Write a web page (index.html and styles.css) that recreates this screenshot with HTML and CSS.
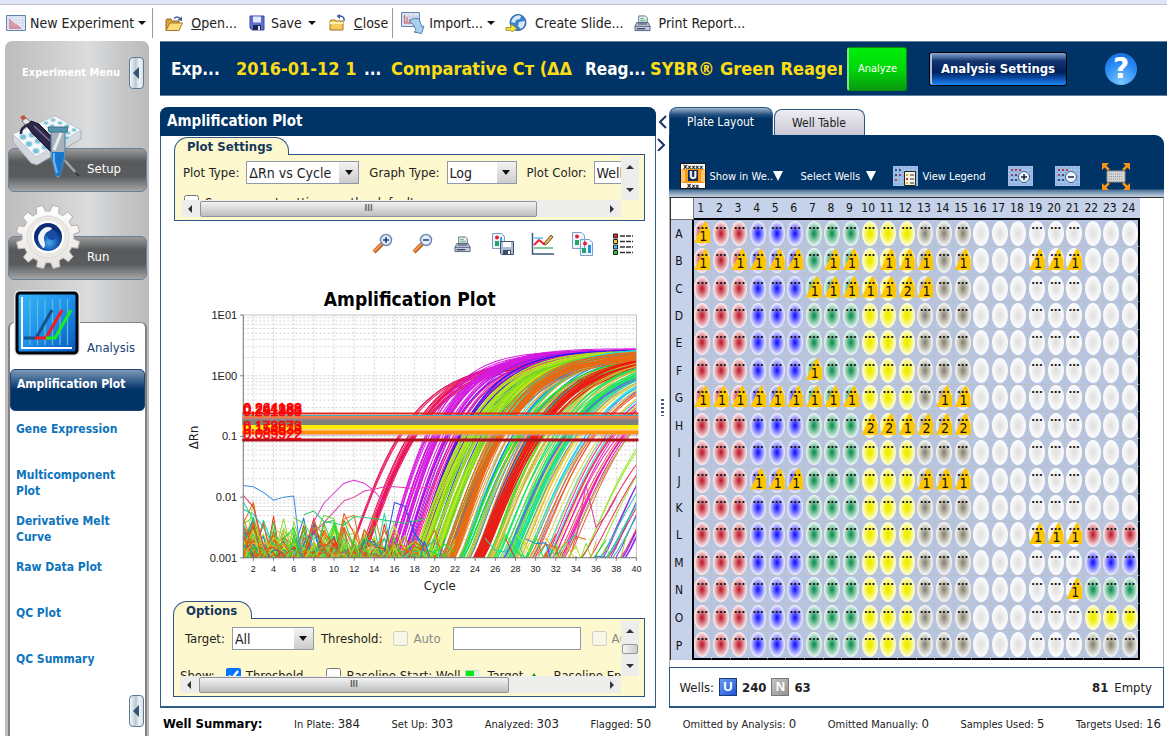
FILE: index.html
```html
<!DOCTYPE html>
<html lang="en">
<head>
  <meta charset="utf-8">
  <title>Amplification Plot</title>
  <link rel="stylesheet" href="styles.css">
</head>
<body>
  <svg class="sprite" width="0" height="0" aria-hidden="true">
    <symbol id="icon-folder" viewBox="0 0 18 17">
      <path d="M1 15V5l1-1h4l1 2h7v9z" fill="#d9a33a" stroke="#94682a"/>
      <path d="M1 15.5 5 8h12.500l-3.500 7.500z" fill="#fbdc74" stroke="#a87a2c"/>
      <path d="M9 3.500q3-3 6 0" fill="none" stroke="#3d5f97" stroke-width="1.500"/>
      <path d="M17 1.500V6l-4.500-1z" fill="#3d5f97"/>
    </symbol>
    <symbol id="icon-close" viewBox="0 0 18 18">
      <path d="M2 16V7l1-1h4l1 1h7v9z" fill="#f5cc5c" stroke="#a0742a"/>
      <path d="M2 9h13" stroke="#fff0b0" stroke-width="2"/>
      <path d="M16 7q1-5-5-5" fill="none" stroke="#3d5f97" stroke-width="1.500"/>
      <path d="M12 0v5L8.500 2z" fill="#3d5f97"/>
    </symbol>
    <symbol id="icon-printer" viewBox="0 0 18 18">
      <path d="M5 9V1h7l2 2v6z" fill="#eefaf0" stroke="#5b6a88"/>
      <path d="M6.500 3.500h4m-4 2h6m-6 2h6" stroke="#5aa07e"/>
      <path d="M3 8h12l2 4v4.500H1V12z" fill="#c5cbde" stroke="#555f80"/>
      <path d="M1 12h16" stroke="#555f80"/>
      <path d="M3 14.500h9" stroke="#40486a" stroke-width="1.500"/>
      <path d="M4 9.500h10" stroke="#343a58"/>
    </symbol>
    <symbol id="icon-floppy" viewBox="0 0 16 16">
      <path d="M1 1h14v14H3l-2-2z" fill="#5d70d0" stroke="#3c4aa4"/>
      <path d="M4 1.500h8v6H4z" fill="#e4eafb"/>
      <path d="M4 10h8v5H4z" fill="#20264e"/>
      <path d="M9 11h2v4H9z" fill="#dfe5fa"/>
    </symbol>
    <symbol id="icon-wells" viewBox="0 0 25 20">
      <path d="M0 0h25v20H0z" fill="#8fb3e0"/>
      <path d="M0 0h25M0 4h25M0 8h25M0 12h25M0 16h25M0 20h25M0 0v20M4 0v20M8 0v20M12 0v20M16 0v20M20 0v20M25 0v20" stroke="#b9d1ee" stroke-width=".7"/>
    </symbol>
  </svg>

  <div class="strip"></div>

  <nav class="toolbar" aria-label="Experiment">
    <button class="toolbar__item toolbar__item--first" type="button">
      <svg width="20" height="16" viewBox="0 0 20 16"><path d="M.5.5h19v15H.5z" fill="#dbe5f5" stroke="#6484ae"/><path d="M3 3h14v10H3z" fill="#eef2fb"/><path d="M4 2v12M7 2v12M10 2v12M13 2v12M16 2v12M2 5h16M2 8h16M2 11h16" stroke="#bccbe4" stroke-width=".6"/><path d="M4 4v9h11M6 6v6M8 8v4M10 9v3M12 10v2" fill="none" stroke="#d4757d" stroke-width="1.300"/></svg>
      New Experiment <span class="caret"></span>
    </button>
    <button class="toolbar__item toolbar__item--open" type="button">
      <svg width="18" height="17"><use href="#icon-folder"/></svg>
      <span><u>O</u>pen...</span>
    </button>
    <button class="toolbar__item toolbar__item--save" type="button">
      <svg width="16" height="16"><use href="#icon-floppy"/></svg>
      Save <span class="caret"></span>
    </button>
    <button class="toolbar__item toolbar__item--close" type="button">
      <svg width="18" height="18"><use href="#icon-close"/></svg>
      <span><u>C</u>lose</span>
    </button>
    <button class="toolbar__item toolbar__item--import" type="button">
      <svg width="24" height="22" viewBox="0 0 24 22"><path d="M.5.5h18v14H.5z" fill="#dbe5f5" stroke="#6484ae"/><path d="M4 2v11M8 2v11M12 2v11M16 2v11M1 5h17M1 9h17" stroke="#b9c9e4" stroke-width=".7"/><path d="M3.500 3v8h8M6 5v5M9 7v3" fill="none" stroke="#d4757d" stroke-width="1.300"/><path d="M9 8q5-3 9-1l3 8 2-1-2.500 7.500L13 20l2-1.500q-1-6-6-8.500z" fill="#a9d0ef" stroke="#5480aa"/></svg>
      Import... <span class="caret"></span>
    </button>
    <button class="toolbar__item toolbar__item--slide" type="button">
      <svg width="22" height="18" viewBox="0 0 22 18"><circle cx="13" cy="8.500" r="8" fill="#3c82cb" stroke="#2d5f9e"/><path d="M8 4q4-4 8-2l-1 3-4 1-1 3-4-1zM14 8l6-1q0 5-4 8l-3-3z" fill="#d4e9f8"/><path d="M1 13.500h5V10l6 4.500-5 3.300-1-1.500H1z" fill="#f7e93a" stroke="#96821f" stroke-width=".8"/></svg>
      Create Slide...
    </button>
    <button class="toolbar__item toolbar__item--print" type="button">
      <svg width="17" height="17"><use href="#icon-printer"/></svg>
      Print Report...
    </button>
  </nav>

  <div class="workspace">
    <aside class="menu">
      <div class="menu__head">
        <strong>Experiment Menu</strong>
        <button class="fold" type="button" aria-label="Collapse menu"></button>
      </div>
      <button class="step" type="button">
        <svg class="step__icon" width="72" height="66" viewBox="0 0 72 66">
          <path d="M1 19 43 1l26 14v9L25 50 19 48 1 27z" fill="#d3d8df" stroke="#a4abb6"/>
          <path d="M1 19 43 1l26 14-45 27z" fill="#f6f8fa" stroke="#c5cad2"/>
          <g fill="#7cc3d8" stroke="#d2eaf2">
            <ellipse cx="11" cy="22" rx="3.500" ry="3"/><ellipse cx="17" cy="29" rx="3.500" ry="3"/><ellipse cx="24" cy="36" rx="3.500" ry="3"/>
            <ellipse cx="20" cy="20" rx="3.500" ry="3"/><ellipse cx="26" cy="26" rx="3.500" ry="3"/><ellipse cx="33" cy="32" rx="3.500" ry="3"/>
            <ellipse cx="34" cy="8" rx="2.500" ry="2"/><ellipse cx="41" cy="5" rx="2.500" ry="2"/><ellipse cx="48" cy="8" rx="2.500" ry="2"/>
            <ellipse cx="55" cy="11" rx="2.500" ry="2"/><ellipse cx="62" cy="15" rx="2.500" ry="2"/><ellipse cx="56" cy="18" rx="2.500" ry="2"/>
            <ellipse cx="40" cy="11" rx="2.500" ry="2"/><ellipse cx="55" cy="23" rx="2.500" ry="2"/><ellipse cx="49" cy="14" rx="2.500" ry="2"/>
          </g>
          <path d="m8 2 4-2 3 4-3 3z" fill="#c95430"/>
          <path d="m10 6 4-3 6 5-4 5z" fill="#e9e6e4" stroke="#77727e"/>
          <path d="m15 11 4-5 8 3 20 20-7 9-20-20z" fill="#2e2748" stroke="#15112a"/>
          <path d="m22 11 16 15" stroke="#77709b" stroke-width="1.500"/>
          <path d="M17 9q-9 4-8 10" fill="none" stroke="#302a48" stroke-width="2.500"/>
          <path d="m47 39 18 20" stroke="#a5a8ad" stroke-width="2.500"/><path d="m63 57 4 4" stroke="#36383b" stroke-width="2"/>
          <path d="M39 16h14v26l-5 19q-2 4-4 0l-5-19z" fill="#a7b2bd" stroke="#4b7a99"/>
          <path d="M40 37h12v6l-4 17q-2 3-4 0l-4-17z" fill="#1676ce"/>
          <path d="M42 38v8l3 12" fill="none" stroke="#74b6ee" stroke-width="2"/>
          <path d="M36 12h20l-1 5H37z" fill="#5594aa" stroke="#3a7389"/>
          <path d="m49 18-7 17" stroke="#e6edf2" stroke-width="3"/>
        </svg>
        Setup
      </button>
      <button class="step step--run" type="button">
        <svg class="step__icon" width="68" height="68" viewBox="-34 -34 68 68">
          <defs>
            <radialGradient id="gear-core" cx=".55" cy=".7"><stop offset="0" stop-color="#4ea8ee"/><stop offset=".6" stop-color="#1559b0"/><stop offset="1" stop-color="#0a2c74"/></radialGradient>
            <linearGradient id="gear-metal" x2="0" y2="1"><stop offset="0" stop-color="#fff"/><stop offset="1" stop-color="#e6e3df"/></linearGradient>
          </defs>
          <path id="gear-teeth" fill="url(#gear-metal)" stroke="#b4aea7"/>
          <circle r="21" fill="#eceae7" stroke="#dedad5"/>
          <circle r="17" fill="#fff" stroke="#e3e0dc"/>
          <circle r="14" fill="url(#gear-core)"/>
          <path d="M-5 11q-8-9-3-16 5-7 12-4-1 3-5 4-5 4-2 12 0 4-2 4z" fill="#f1f4fa"/>
          <circle cx="4" cy="-2" r="5" fill="#154ea4"/>
        </svg>
        Run
      </button>
      <div class="analysis">
        <button class="step step--analysis" type="button">
          <svg class="step__icon" width="68" height="68" viewBox="0 0 68 68">
            <defs><linearGradient id="analysis-fill" x2="1" y2="1"><stop offset="0" stop-color="#35b7fa"/><stop offset=".5" stop-color="#1e90ee"/><stop offset="1" stop-color="#0754b8"/></linearGradient></defs>
            <rect x="1" y="1" width="66" height="66" rx="6" fill="#e6e6e6"/>
            <rect x="4" y="4" width="60" height="60" rx="3" fill="url(#analysis-fill)" stroke="#020509" stroke-width="3"/>
            <path d="M17 10v46M24.500 10v46M32 10v46M39.500 10v46M47 10v46M54.500 10v46" stroke="#5fc1c8" stroke-width="1.200"/>
            <path d="M9 8v51h50" fill="none" stroke="#fff" stroke-width="2"/>
            <path d="M11 49h12l16-28" fill="none" stroke="#155089" stroke-width="3"/>
            <path d="M22 49h11l16-28" fill="none" stroke="#f71820" stroke-width="3"/>
            <path d="M33 49h9l16-28" fill="none" stroke="#14ef22" stroke-width="3"/>
          </svg>
          Analysis
        </button>
        <nav class="links" aria-label="Analysis">
          <a class="links__item links__item--active" href="#plot">Amplification Plot</a>
          <a class="links__item" href="#gene">Gene Expression</a>
          <a class="links__item" href="#multicomponent">Multicomponent Plot</a>
          <a class="links__item" href="#melt">Derivative Melt Curve</a>
          <a class="links__item" href="#raw">Raw Data Plot</a>
          <a class="links__item" href="#qc">QC Plot</a>
          <a class="links__item" href="#summary">QC Summary</a>
        </nav>
        <button class="fold fold--bottom" type="button" aria-label="Collapse menu"></button>
      </div>
    </aside>

    <main class="content">
      <header class="experiment">
        <span class="experiment__label">Exp...</span>
        <span class="experiment__value experiment__value--name">2016-01-12 1</span>
        <span class="experiment__label experiment__label--type">...</span>
        <span class="experiment__value experiment__value--type">Comparative Cт (ΔΔ</span>
        <span class="experiment__label">Reag...</span>
        <span class="experiment__value experiment__value--reagent">SYBR® Green Reagents</span>
        <button class="analyze" type="button">Analyze</button>
        <button class="settings" type="button">Analysis Settings</button>
        <button class="help" type="button" aria-label="Help">?</button>
      </header>

      <div class="panels">
        <section class="plot" id="plot">
          <h2 class="plot__title">Amplification Plot</h2>

          <div class="box">
            <h3 class="box__tab">Plot Settings</h3>
            <div class="box__body">
              <div class="box__view">
                <div class="row row--settings">
                  <label for="plot-type">Plot Type:</label>
                  <span class="select select--type"><select id="plot-type"><option>ΔRn vs Cycle</option></select></span>
                  <label class="row__next" for="graph-type">Graph Type:</label>
                  <span class="select select--graph"><select id="graph-type"><option>Log</option></select></span>
                  <label class="row__next" for="plot-color">Plot Color:</label>
                  <span class="select select--color"><select id="plot-color"><option>Well</option></select></span>
                </div>
                <div class="row row--cut">
                  <input id="save-default" type="checkbox">
                  <label for="save-default">Save current settings as the default</label>
                </div>
              </div>
              <div class="vbar"><i class="arrow arrow--up"></i><i class="arrow arrow--down"></i></div>
              <div class="hbar"><i class="arrow arrow--left"></i><div class="hbar__track"><b class="hbar__thumb hbar__thumb--settings">III</b></div><i class="arrow arrow--right"></i></div>
            </div>
          </div>

          <div class="tools">
            <button type="button" aria-label="Zoom in"><svg width="22" height="24" viewBox="0 0 22 24"><path d="m2 20 8-8" stroke="#b35318" stroke-width="4"/><path d="m2 19.500 8-8" stroke="#f7994a" stroke-width="2"/><circle cx="14" cy="8" r="5.500" fill="#e2f0fc" stroke="#7389b4" stroke-width="1.500"/><path d="M11 8h6M14 5v6" stroke="#183b78" stroke-width="1.500"/></svg></button>
            <button type="button" aria-label="Zoom out"><svg width="22" height="24" viewBox="0 0 22 24"><path d="m2 20 8-8" stroke="#b35318" stroke-width="4"/><path d="m2 19.500 8-8" stroke="#f7994a" stroke-width="2"/><circle cx="14" cy="8" r="5.500" fill="#e2f0fc" stroke="#7389b4" stroke-width="1.500"/><path d="M11 8h6" stroke="#183b78" stroke-width="1.500"/></svg></button>
            <button type="button" aria-label="Print"><svg width="17" height="17"><use href="#icon-printer"/></svg></button>
            <button type="button" aria-label="Save plot"><svg width="22" height="22" viewBox="0 0 22 22"><path d="M.5.5h9l3 3v12H.5z" fill="#eef4fc" stroke="#7c9dc8"/><circle cx="5" cy="4.500" r="2" fill="#f21a2c"/><path d="M3 8h4v5H3z" fill="#24a568"/><path d="M8 4h2v9H8z" fill="#38a6e8"/><path d="M8.500 8.500h13v13h-12l-1-1z" fill="#aebbd0" stroke="#40526f"/><path d="M11 9h8v5h-8z" fill="#fff"/><path d="M11 17h8v4h-8z" fill="#3d4c66"/><path d="M16 18h2v3h-2z" fill="#fff"/></svg></button>
            <button type="button" aria-label="Edit plot"><svg width="23" height="24" viewBox="0 0 23 24"><path d="M1.500 1v21H23" fill="none" stroke="#385783" stroke-width="1.500"/><path d="M3 6h9" stroke="#62bcf0" stroke-width="1.500"/><path d="M3 16h19" stroke="#55b879" stroke-width="1.500"/><path d="m3 13 5-5 5 4 4-2" fill="none" stroke="#ef1d25" stroke-width="2"/><path d="m14 10 6-7 2 2-6 7-3 1z" fill="#e3b35c" stroke="#7c5930"/></svg></button>
            <button type="button" aria-label="Copy plot"><svg width="22" height="24" viewBox="0 0 22 24"><path d="M.5.500h9l3 3v13H.5zM8.500 7.500h9l3 3v13h-12z" fill="#eef4fc" stroke="#7c9dc8"/><circle cx="5" cy="4.500" r="2" fill="#f21a2c"/><path d="M3 8h4v5H3z" fill="#24a568"/><circle cx="13" cy="11.500" r="2" fill="#f21a2c"/><path d="M10 16h4v5h-4z" fill="#24a568"/><path d="M16 13h3v8h-3z" fill="#2291e4"/></svg></button>
            <button type="button" aria-label="Legend"><svg width="20" height="22" viewBox="0 0 20 22"><path d="M7 3h13M7 8.500h13M7 14h13M7 19.500h13" stroke="#333" stroke-width="1.500" stroke-dasharray="5 1"/><g stroke="#222"><path d="M.5 1h4v4h-4z" fill="#e52626"/><path d="M.5 6.500h4v4h-4z" fill="#ead52b"/><path d="M.5 12h4v4h-4z" fill="#35c8e0"/><path d="M.5 17.500h4v4h-4z" fill="#21c52e"/></g></svg></button>
          </div>

          <svg class="chart" id="chart" viewBox="0 0 492 312" role="img" aria-label="Amplification Plot"></svg>

          <div class="box box--options">
            <h3 class="box__tab box__tab--options">Options</h3>
            <div class="box__body box__body--options">
              <div class="box__view">
                <div class="row row--options">
                  <label for="target">Target:</label>
                  <span class="select select--target"><select id="target"><option>All</option></select></span>
                  <label for="threshold">Threshold:</label>
                  <span class="tick"><input id="auto-threshold" type="checkbox" disabled><label for="auto-threshold">Auto</label></span>
                  <input class="threshold" id="threshold" type="text">
                  <span class="tick"><input id="auto-baseline" type="checkbox" disabled><label for="auto-baseline">Auto Baseline</label></span>
                </div>
                <div class="row row--show">
                  <span>Show:</span>
                  <span class="tick tick--show"><input id="show-threshold" type="checkbox" checked><label for="show-threshold">Threshold</label></span>
                  <span class="tick tick--start"><input id="show-start" type="checkbox"><label for="show-start">Baseline Start: Well</label><i class="swatch"></i></span>
                  <span>Target</span><i class="peak"></i>
                  <span class="row__end">Baseline End: Well</span>
                </div>
              </div>
              <div class="vbar"><i class="arrow arrow--up"></i><b class="vbar__thumb"></b><i class="arrow arrow--down"></i></div>
              <div class="hbar"><i class="arrow arrow--left"></i><div class="hbar__track"><b class="hbar__thumb hbar__thumb--options">III</b></div><i class="arrow arrow--right"></i></div>
            </div>
          </div>
        </section>

        <div class="splitter">
          <svg width="10" height="36" viewBox="0 0 10 36"><path d="M9 2 3 8l6 6M1 25l6 6-6 6" transform="translate(0 -1)" fill="none" stroke="#16336b" stroke-width="2"/></svg>
          <i class="splitter__grip"></i>
        </div>

        <section class="plate">
          <div class="tabs" role="tablist">
            <button class="tabs__item tabs__item--active" type="button" role="tab" aria-selected="true">Plate Layout</button>
            <button class="tabs__item" type="button" role="tab">Well Table</button>
          </div>
          <div class="plate__bar">
            <button class="plate__show" type="button">
              <svg width="26" height="26" viewBox="0 0 26 26"><path d="M0 0h26v26H0z" fill="#161616"/><path d="M1 1h24v24H1z" fill="#fff"/><path d="M2 6h22v14H2z" fill="#f79a12"/><path d="M1 6v14l4-2V8zM25 6v14l-4-2V8z" fill="#fbc677"/><path d="M8 7h10v11H8z" fill="#132a56"/><text x="13" y="16" class="u-icon">U</text><text x="13" y="6" class="x-icon">Xxxxx</text><text x="13" y="25" class="x-icon">Xxx</text></svg>
              <span>Show in We..</span><i class="drop"></i>
            </button>
            <button class="plate__select" type="button">Select Wells <i class="drop"></i></button>
            <button class="plate__legend" type="button">
              <svg width="25" height="20" viewBox="0 0 25 20"><use href="#icon-wells"/><path d="M2 3h2v2H2zM6 3h2v2H6zM2 8h2v2H2z" fill="#304f82"/><path d="M6 8h2v2H6zM2 13h2v2H2z" fill="#b53950"/><path d="M11.500 5.500h11v14h-11z" fill="#f3f0e4" stroke="#222"/><path d="M13 8h2v2h-2z" fill="#ee9e20"/><path d="M13 12h2v2h-2z" fill="#d22626"/><path d="M13 16h2v2h-2z" fill="#d6c322"/><path d="M17 9h4M17 13h4M17 17h4" stroke="#333"/></svg>
              View Legend
            </button>
            <button class="plate__zoom" type="button" aria-label="Enlarge wells"><svg width="25" height="20" viewBox="0 0 25 20"><use href="#icon-wells"/><path d="M3 3h2v2H3zM7 3h2v2H7zM11 3h2v2h-2zM3 8h2v2H3z" fill="#b53950"/><path d="M7 8h2v2H7zM3 13h2v2H3zM7 13h2v2H7z" fill="#304f82"/><circle cx="16" cy="11" r="5.500" fill="#edf4fb" stroke="#40628a"/><path d="M13 11h6M16 8v6" stroke="#132447" stroke-width="1.500"/></svg></button>
            <button class="plate__zoom" type="button" aria-label="Reduce wells"><svg width="25" height="20" viewBox="0 0 25 20"><use href="#icon-wells"/><path d="M3 3h2v2H3zM7 3h2v2H7zM11 3h2v2h-2zM3 8h2v2H3z" fill="#b53950"/><path d="M7 8h2v2H7zM3 13h2v2H3zM7 13h2v2H7z" fill="#304f82"/><circle cx="16" cy="11" r="5.500" fill="#edf4fb" stroke="#40628a"/><path d="M13 11h6" stroke="#132447" stroke-width="1.500"/></svg></button>
            <button class="plate__zoom" type="button" aria-label="Fit plate"><svg width="28" height="27" viewBox="0 0 28 27"><path d="M5 8h18v11H5z" fill="#d5d5d2" stroke="#8d8e90"/><path d="M7 11h14M7 13.500h14M7 16h14" stroke="#8d9098" stroke-dasharray="1 1"/><path d="M7 7 2 2M21 7l5-5M7 20l-5 5M21 20l5 5" stroke="#f79418" stroke-width="2.500"/><path d="M0 0h7L0 7zM28 0v7l-7-7zM0 27v-7l7 7zM28 27h-7l7-7z" fill="#f79418"/></svg></button>
          </div>
          <div class="plate__grid">
            <table class="wells" id="wells"></table>
          </div>
          <div class="plate__foot">
            <span>Wells:</span><b class="badge badge--u">U</b><strong>240</strong><b class="badge badge--n">N</b><strong>63</strong>
            <span class="plate__empty"><strong>81</strong>Empty</span>
          </div>
        </section>
      </div>

      <footer class="summary">
        <strong class="summary__title">Well Summary:</strong>
        <span>In Plate: <b>384</b></span>
        <span>Set Up: <b>303</b></span>
        <span>Analyzed: <b>303</b></span>
        <span>Flagged: <b>50</b></span>
        <span>Omitted by Analysis: <b>0</b></span>
        <span>Omitted Manually: <b>0</b></span>
        <span>Samples Used: <b>5</b></span>
        <span>Targets Used: <b>16</b></span>
      </footer>
    </main>
  </div>

  <script src="script.js"></script>
</body>
</html>
```

FILE: styles.css
```css
* {
  box-sizing: border-box;
}

body {
  display: flex;
  flex-direction: column;
  min-height: 100vh;
  margin: 0;
  font-family: "DejaVu Sans Condensed", "DejaVu Sans", sans-serif;
  font-size: 13px;
  color: #222;
  background-color: #fff;
}

button {
  padding: 0;
  border: 0;
  font: inherit;
  color: inherit;
  background: none;
}

svg {
  flex-shrink: 0;
}

.sprite {
  position: absolute;
}

.strip {
  height: 5px;
  border-bottom: 1px solid #bfc3cc;
  background-color: #dfe6f8;
}

/* Top toolbar */

.toolbar {
  display: flex;
  align-items: center;
  height: 36px;
  padding-left: 6px;
  font-size: 14px;
}

.toolbar__item {
  display: flex;
  align-items: center;
  gap: 8px;
  height: 30px;
  white-space: nowrap;
}

.toolbar__item--first {
  gap: 4px;
  margin-right: 12px;
  padding-right: 6px;
  border-right: 1px solid #999;
}

.toolbar__item--open {
  margin-right: 12px;
}

.toolbar__item--save {
  gap: 6px;
  margin-right: 12px;
}

.toolbar__item--close {
  margin-right: 8px;
  padding-right: 4px;
  border-right: 1px solid #999;
}

.toolbar__item--import {
  gap: 4px;
  margin-right: 10px;
}

.toolbar__item--slide {
  margin-right: 10px;
}

.caret {
  border: 4px solid transparent;
  border-top-color: #111;
  border-bottom: 0;
}

.workspace {
  display: flex;
  flex: 1;
  gap: 11px;
  padding-left: 5px;
}

/* Experiment menu */

.menu {
  display: flex;
  flex-direction: column;
  width: 144px;
  flex-shrink: 0;
  margin-bottom: 6px;
  padding: 0 2px 0 3px;
  border-radius: 7px 7px 0 0;
  background: linear-gradient(90deg, #bdbdbd, #c9c9ca 25%, #dbdcdd 58%, #c7c8c9 80%, #bbb);
}

.menu__head {
  display: flex;
  justify-content: space-between;
  align-items: center;
  height: 63px;
  margin-bottom: 44px;
  padding: 0 3px 0 14px;
  font-size: 11px;
  color: #fff;
}

.fold {
  width: 15px;
  height: 32px;
  border: 1px solid #5e7b93;
  border-radius: 4px;
  background: linear-gradient(90deg, #f4f8fa, #b9c9d2 45%, #eef3f6 70%, #d8e2e8);
}

.fold::before {
  content: "";
  display: block;
  width: 0;
  margin-left: 3px;
  border: 6px solid transparent;
  border-right-color: #35536f;
  border-left: 0;
}

.fold--bottom {
  align-self: flex-end;
  margin: auto 1px 9px 0;
}

.step {
  position: relative;
  display: flex;
  align-items: center;
  height: 44px;
  margin-bottom: 44px;
  padding: 0 0 4px 78px;
  border: 1px solid #6b8098;
  border-radius: 6px;
  color: #fff;
  background: linear-gradient(#9a9b9c, #58595a 30%, #5a5b5c 65%, #a5a6a7);
}

.step__icon {
  position: absolute;
  top: -34px;
  left: 3px;
}

.step--run {
  margin-bottom: 42px;
}

.step--run .step__icon {
  left: 5px;
}

.step--analysis {
  width: 100%;
  height: 46px;
  margin: 0;
  padding: 2px 0 0 77px;
  border: 0;
  color: #1b3f76;
  background: none;
}

.analysis {
  display: flex;
  flex-direction: column;
  flex: 1;
  border: 2px solid #808285;
  border-bottom: 0;
  border-top-width: 1px;
  border-radius: 6px 6px 0 0;
  background-color: #fff;
}

.links {
  display: flex;
  flex-direction: column;
}

.links__item {
  height: 46px;
  padding: 6px 16px 0 6px;
  font-size: 12px;
  font-weight: bold;
  line-height: 16px;
  text-decoration: none;
  color: #0d74bd;
}

.links__item--active {
  height: 42px;
  margin-bottom: 4px;
  padding-right: 0;
  border: 1px solid #1d4473;
  border-radius: 5px;
  color: #fff;
  background: linear-gradient(#7e9ab8, #234f80 35%, #003366 50%, #003366);
}

/* Experiment header */

.content {
  display: flex;
  flex-direction: column;
  flex: 1;
  min-width: 0;
}

.experiment {
  display: flex;
  align-items: center;
  height: 55px;
  padding: 0 30px 0 11px;
  border: 1px solid #5f7fa3;
  border-width: 1px 0;
  font-size: 17px;
  font-weight: bold;
  white-space: nowrap;
  color: #fff;
  background-color: #003366;
}

.experiment__label {
  width: 65px;
}

.experiment__label--type {
  width: 27px;
}

.experiment__value {
  overflow: hidden;
  font-size: 18px;
  color: #fcdc14;
}

.experiment__value--name {
  width: 128px;
}

.experiment__value--type {
  width: 185px;
  margin-right: 9px;
}

.experiment__value--reagent {
  flex: 1;
  margin-right: 5px;
}

.analyze {
  width: 60px;
  height: 44px;
  margin-right: 22px;
  border: 1px solid #0a8a0a;
  border-left: 2px solid #7be87b;
  border-radius: 3px;
  font-size: 11px;
  font-weight: normal;
  background: linear-gradient(#00ee0a, #00d808 50%, #0a9a10);
}

.settings {
  width: 138px;
  height: 34px;
  margin-right: 38px;
  border: 1px solid #000;
  border-radius: 3px;
  font-size: 13px;
  box-shadow: inset 2px 0 0 #a9c1df;
  background: linear-gradient(#8ba6d0, #12356f 25%, #002058 60%, #0b4fae 80%, #1c86f5);
}

.help {
  width: 32px;
  height: 32px;
  border-radius: 50%;
  font-family: "DejaVu Sans", sans-serif;
  font-size: 28px;
  line-height: 32px;
  background: radial-gradient(circle at 50% 90%, #79c7ff, #2b8cf5 55%, #1263d6);
}

.panels {
  display: grid;
  grid-template-columns: minmax(0, 1fr) 13px minmax(0, 1fr);
  flex: 1;
  margin: 11px 3px 0 0;
}

/* Amplification plot */

.plot {
  display: flex;
  flex-direction: column;
  border: 1px solid #2f5d8c;
  border-width: 0 1px 2px;
  border-radius: 8px 8px 0 0;
}

.plot__title {
  height: 29px;
  margin: 0 -1px;
  padding-left: 7px;
  border-radius: 8px 8px 0 0;
  font-size: 15px;
  line-height: 29px;
  color: #fff;
  background-color: #003366;
}

.box {
  margin: 1px 10px 0 13px;
}

.box__tab {
  position: relative;
  z-index: 1;
  width: 115px;
  height: 18px;
  margin: 0 0 -1px;
  padding-left: 12px;
  border: 1px solid #2b5785;
  border-bottom: 0;
  border-radius: 14px 14px 0 0;
  font-size: 13px;
  line-height: 17px;
  color: #17375e;
  background-color: #fdf8cd;
}

.box__body {
  display: grid;
  grid-template-columns: minmax(0, 1fr) 18px;
  grid-template-rows: 43px 17px;
  padding: 2px 5px 3px 6px;
  border: 1px solid #2b5785;
  background-color: #fdf8cd;
}

.box__view {
  overflow: hidden;
}

.row {
  display: flex;
  align-items: center;
  gap: 4px;
  padding: 4px 0 0 2px;
  white-space: nowrap;
}

.row--settings {
  gap: 7px;
}

.row label,
.row span {
  flex-shrink: 0;
}

.row__next {
  margin-left: 3px;
}

.row--cut {
  gap: 6px;
  padding: 11px 0 0 3px;
}

.row input[type="checkbox"] {
  flex-shrink: 0;
  width: 15px;
  height: 15px;
  margin: 0;
}

.select {
  display: grid;
  grid-template-columns: minmax(0, 1fr) 19px;
  align-items: center;
  height: 23px;
  border: 1px solid #8e9aa8;
  font-size: 14px;
  background-color: #fff;
}

.select select {
  grid-area: 1 / 1 / 2 / 3;
  height: 21px;
  padding: 0 0 0 2px;
  border: 0;
  appearance: none;
  font: inherit;
  color: #222;
  background: linear-gradient(90deg, #fff 0 0) left / calc(100% - 19px) no-repeat, linear-gradient(#f3f3f3, #ccc);
}

.select::after {
  content: "";
  grid-area: 1 / 2;
  justify-self: center;
  border: 4px solid transparent;
  border-top: 5px solid #111;
  border-bottom: 0;
  pointer-events: none;
}

.select--type {
  width: 113px;
}

.select--graph {
  width: 70px;
}

.select--color {
  width: 90px;
}

.select--target {
  width: 82px;
}

.vbar,
.hbar {
  display: flex;
  justify-content: space-between;
  align-items: center;
  background-color: #ededec;
}

.vbar {
  flex-direction: column;
  padding: 8px 0;
}

.vbar__thumb {
  width: 16px;
  height: 10px;
  border: 1px solid #999;
  border-radius: 2px;
  background: linear-gradient(90deg, #f5f5f5, #ccc);
}

.hbar {
  padding: 0 7px;
}

.hbar__track {
  flex: 1;
  margin: 0 8px;
}

.hbar__thumb {
  display: block;
  height: 16px;
  border: 1px solid #929292;
  border-radius: 2px;
  font-size: 8px;
  line-height: 14px;
  text-align: center;
  color: #666;
  background: linear-gradient(#f2f2f2, #d9d9d9 50%, #bdbdbd);
}

.hbar__thumb--settings {
  width: 84%;
}

.hbar__thumb--options {
  width: 77%;
}

.arrow {
  border: 4px solid transparent;
}

.arrow--up {
  border-top: 0;
  border-bottom-color: #333;
}

.arrow--down {
  border-bottom: 0;
  border-top-color: #333;
}

.arrow--left {
  border-left: 0;
  border-right-color: #333;
}

.arrow--right {
  border-right: 0;
  border-left-color: #333;
}

.tools {
  display: flex;
  justify-content: flex-end;
  gap: 16px;
  margin: 10px 20px 27px 0;
}

.tools button {
  display: grid;
  place-items: center;
  width: 24px;
  height: 26px;
}

.chart {
  width: 100%;
  font-family: "Liberation Sans", Arial, sans-serif;
  font-size: 11px;
  fill: #222;
}

.chart__title {
  font-family: "DejaVu Sans Condensed", "DejaVu Sans", sans-serif;
  font-size: 19px;
  font-weight: bold;
  fill: #000;
}

.chart__tick {
  font-size: 9px;
}

.chart__axis {
  font-family: "DejaVu Sans Condensed", "DejaVu Sans", sans-serif;
  font-size: 13px;
}

.chart__grid {
  stroke: #d3d3d3;
  stroke-dasharray: 2 2;
}

.chart__mark {
  font-size: 14px;
  fill: #fe0000;
  stroke: #fe0000;
  stroke-width: .5;
}

.chart__curve {
  fill: none;
  stroke-linejoin: round;
}

.box--options {
  margin: auto 10px 9px 12px;
}

.box__tab--options {
  width: 79px;
}

.box__body--options {
  grid-template-rows: 55px 17px;
}

.row--options {
  gap: 7px;
  padding: 6px 0 0 5px;
}

.row .tick {
  display: flex;
  align-items: center;
  gap: 5px;
  margin-left: 4px;
}

.tick input:disabled + label {
  color: #888;
}

.threshold {
  flex-shrink: 0;
  width: 128px;
  height: 23px;
  margin-left: 5px;
  border: 1px solid #8e9aa8;
}

.row--show {
  gap: 7px;
  padding: 18px 0 0;
}

.row .tick--start {
  margin-left: 16px;
}

.row__end {
  margin-left: 8px;
}

.swatch {
  width: 15px;
  height: 12px;
  border: 1px solid #b7d8b7;
  border-right: 6px solid #e2f2df;
  background-color: #0e1;
}

.peak {
  border: 4px solid transparent;
  border-top: 0;
  border-bottom: 6px solid #188a2c;
}

.splitter {
  display: flex;
  flex-direction: column;
  align-items: center;
  padding-top: 8px;
}

.splitter__grip {
  width: 3px;
  height: 17px;
  margin-top: 248px;
  background: repeating-linear-gradient(#44598a 0 2px, #fff 2px 4px);
}

/* Plate layout */

.plate {
  display: flex;
  flex-direction: column;
}

.tabs {
  display: flex;
  align-items: flex-end;
  gap: 1px;
}

.tabs__item {
  width: 91px;
  height: 26px;
  border: 1px solid #2b5785;
  border-bottom: 0;
  border-radius: 8px 8px 0 0;
  font-size: 12px;
  color: #222;
  background: linear-gradient(#eeedf3, #c9c8d5);
}

.tabs__item--active {
  width: 104px;
  height: 28px;
  color: #fff;
  background: linear-gradient(#a2b6cc, #234f80 25%, #003366 40%);
}

.plate__bar {
  display: flex;
  align-items: center;
  height: 62px;
  padding: 20px 34px 0 11px;
  border-radius: 0 9px 0 0;
  font-size: 11px;
  white-space: nowrap;
  color: #fff;
  background: linear-gradient(#003366 54px, #4d7298 55px, #b9c8d9 61px);
}

.plate__bar button {
  display: flex;
  align-items: center;
}

.u-icon {
  font: bold 10px "DejaVu Sans", sans-serif;
  text-anchor: middle;
  fill: #fff;
}

.x-icon {
  font: bold 6px "DejaVu Sans", sans-serif;
  text-anchor: middle;
  fill: #111;
}

.drop {
  border: 5px solid transparent;
  border-top: 10px solid #fff;
  border-bottom: 0;
}

.plate__show {
  width: 121px;
  gap: 4px;
}

.plate__show span {
  margin-right: -4px;
}

.plate__select {
  gap: 6px;
  width: 92px;
}

.plate__legend {
  gap: 5px;
  flex: 1;
}

.plate__zoom {
  margin-left: 22px;
}

.plate__grid {
  flex: 1;
  padding-right: 23px;
  border: 1px solid #a8afb8;
  border-top-color: #333;
  border-bottom: 0;
}

.wells {
  width: 100%;
  height: 462px;
  border-collapse: separate;
  border-spacing: 0;
  border-left: 1px solid #333;
  table-layout: fixed;
}

.wells th {
  padding: 0;
  font-size: 12px;
  font-weight: normal;
  color: #111;
  background-color: #c5d2ea;
}

.wells thead th {
  height: 22px;
  padding-right: 4px;
  border-bottom: 2px solid #000;
}

.wells thead th:first-child {
  width: 23px;
  border-right: 1px solid #777;
  border-bottom: 1px solid #777;
  background-color: #fff;
}

.wells tbody th {
  padding-right: 4px;
  border-right: 2px solid #000;
}

.wells td {
  padding: 0;
  border-right: 1px solid #bfc0c4;
  border-bottom: 1px solid #bfc0c4;
  background-color: #b6c5e3;
}

.wells td:last-child {
  border-right: 2px solid #000;
}

.wells tbody tr:last-child td {
  border-bottom: 2px solid #000;
}

.well {
  --tint: #dedede;
  position: relative;
  width: 16px;
  height: 25px;
  margin: 0 auto;
  border-radius: 50%;
  background: radial-gradient(ellipse at 50% 50%, var(--tint), #fff 74%);
}

.well--red { --tint: #bb1020; }
.well--blue { --tint: #0808ff; }
.well--green { --tint: #008a48; }
.well--gray { --tint: #827f69; }

.well--yellow {
  background: radial-gradient(ellipse at 50% 50%, #f0ee00 15%, #fffff0 74%);
}

.well__dots {
  position: relative;
  z-index: 1;
  display: block;
  height: 9px;
  font-family: "DejaVu Sans", sans-serif;
  font-size: 10px;
  font-weight: bold;
  line-height: 9px;
  text-align: center;
  color: #111;
}

.well__flag {
  position: absolute;
  top: 1px;
  left: 0;
  width: 16px;
  height: 21px;
  padding: 8px 0 0 5px;
  font-size: 14px;
  line-height: 12px;
  color: #111;
  clip-path: polygon(62% 0, 76% 0, 100% 50%, 100% 100%, 0 100%);
  background-color: #fec600;
}

.plate__foot {
  display: flex;
  align-items: center;
  gap: 5px;
  height: 41px;
  padding: 0 11px 0 10px;
  border: 1px solid #2b5785;
  border-bottom-width: 2px;
}

.badge {
  width: 18px;
  height: 18px;
  border: 1px solid #173b78;
  font-family: "Liberation Sans", Arial, sans-serif;
  line-height: 16px;
  text-align: center;
  color: #fff;
  background: linear-gradient(135deg, #6a9bf2, #1d55d8);
}

.badge--n {
  border-color: #777;
  background: linear-gradient(135deg, #c5c5c5, #929292);
}

.plate__empty {
  display: flex;
  gap: 6px;
  margin-left: auto;
}

/* Well summary */

.summary {
  display: flex;
  justify-content: space-between;
  align-items: center;
  height: 34px;
  padding: 0 6px 4px 3px;
  font-size: 11px;
  white-space: nowrap;
}

.summary__title {
  font-size: 13px;
  color: #000;
}

.summary b {
  font-size: 13px;
  font-weight: normal;
}
```

FILE: script.js
```js
const SVG_NS = 'http://www.w3.org/2000/svg';
const chart = document.querySelector('#chart');
const plot = { left: 82, right: 474, top: 31, bottom: 273 };

let seed = 7;

function random() {
  seed = (seed * 16807) % 2147483647;
  return seed / 2147483647;
}

function between(min, max) {
  return min + random() * (max - min);
}

function add(parent, name, attributes, text) {
  const element = document.createElementNS(SVG_NS, name);
  Object.entries(attributes).forEach(([key, value]) => element.setAttribute(key, value));
  if (text) element.textContent = text;
  parent.append(element);
  return element;
}

function getX(cycle) {
  return plot.left + (cycle - 1) / 39 * (plot.right - plot.left);
}

// level is log10 of ΔRn, from -3 to 1
function getY(level) {
  return plot.bottom - (level + 3) / 4 * (plot.bottom - plot.top);
}

function drawGrid() {
  const group = add(chart, 'g', { class: 'chart__grid' });

  for (let cycle = 2; cycle <= 40; cycle += 2) {
    add(group, 'path', { d: `M${getX(cycle)} ${plot.top}V${plot.bottom}` });
  }

  for (let decade = -3; decade < 1; decade++) {
    for (let n = 1; n < 10; n++) {
      add(group, 'path', { d: `M${plot.left} ${getY(decade + Math.log10(n))}H${plot.right}` });
    }
  }
}

function drawLine(parent, points, color, width = 1) {
  const d = points.map(([cycle, level]) => `${getX(cycle).toFixed(1)} ${getY(level).toFixed(1)}`).join('L');
  add(parent, 'path', { d: `M${d}`, class: 'chart__curve', stroke: color, 'stroke-width': width });
}

// Baseline noise before the reaction starts
function drawNoise(parent, color, end) {
  const points = [];
  for (let cycle = 1; cycle <= end; cycle++) {
    const start = cycle < 3 ? 0.25 : 0;
    points.push([cycle, -3.12 + start + between(-0.3, 0.3) + random() ** 6 * 0.6]);
  }
  drawLine(parent, points, color);
}

function drawRise(parent, color, start, top, tau) {
  const points = [[start - 0.6, -3.4]];
  for (let u = 0; start + u < 40; u += 0.5) {
    points.push([start + u, -3 + (top + 3) * (1 - Math.exp(-((u / tau) ** 1.2)))]);
  }
  points.push([40, -3 + (top + 3) * (1 - Math.exp(-(((40 - start) / tau) ** 1.2)))]);
  drawLine(parent, points, color);
}

// color, first start cycle, last start cycle, curves, top level, tau
const families = [
  ['#e8175d', 11.2, 11.5, 3, 0.34, 5.3],
  ['#e8175d', 12.2, 12.9, 14, 0.32, 5.3],
  ['#d41ae0', 15, 17, 26, 0.45, 4.6],
  ['#8a1af0', 16.6, 19, 8, 0.45, 4.8],
  ['#f01aa0', 16.6, 18.6, 10, 0.42, 4.9],
  ['#2a1af0', 17.8, 20.4, 12, 0.44, 5.1],
  ['#b4e61a', 17.4, 20.2, 34, 0.42, 5.4],
  ['#6fdc1a', 18.4, 21.4, 14, 0.42, 5.4],
  ['#1ad8e8', 20.4, 24.6, 13, 0.47, 5.6],
  ['#1a78e8', 21, 25.6, 12, 0.42, 5.6],
  ['#2ae61a', 21.8, 26, 18, 0.4, 5.7],
  ['#e8a23a', 21, 25, 9, 0.4, 5.5],
  ['#e86a14', 20.6, 22, 22, 0.43, 5.2],
  ['#ee1a14', 23.8, 24.9, 20, 0.4, 6],
  ['#d8b838', 25, 28.5, 15, 0.38, 6],
  ['#1ae666', 26, 28, 18, 0.36, 6],
  ['#5f66e8', 26.8, 31, 5, 0.34, 6],
  ['#1ad8e8', 27.5, 31.5, 6, 0.3, 6.2],
  ['#e8d048', 28, 33, 9, 0.3, 6.2],
  ['#e85a3a', 29, 33.5, 7, 0.24, 6.2],
  ['#f01ab0', 31, 33, 10, 0.2, 6],
  ['#9ae62a', 32, 37, 4, 0.1, 6.2],
  ['#8a2af0', 36.5, 39, 8, 0, 6],
  ['#1ac8a8', 34, 39, 4, 0, 7],
  ['#ee2a60', 34.5, 38.5, 4, 0, 7]
];

function drawCurves() {
  const clip = add(add(chart, 'defs', {}), 'clipPath', { id: 'plot-area' });
  add(clip, 'rect', { x: plot.left, y: plot.top, width: plot.right - plot.left, height: plot.bottom - plot.top });
  const group = add(chart, 'g', { 'clip-path': 'url(#plot-area)' });

  families.forEach(([color, first, last, count, top, tau]) => {
    for (let i = 0; i < count; i++) {
      const start = first + (last - first) * random();
      drawRise(group, color, start, top - random() * 0.16, tau * between(0.96, 1.05));
    }
  });

  const colors = ['#1a78e8', '#2ae61a', '#b4e61a', '#1ad8a8', '#ee3014', '#d8b838', '#e86a14', '#8fd82c', '#2fc83c', '#ee5014'];
  for (let i = 0; i < 120; i++) {
    drawNoise(group, colors[i % colors.length], 9 + i % 14);
  }
  for (let i = 0; i < 14; i++) {
    const start = Math.floor(between(25, 35));
    const color = colors[i % colors.length];
    drawLine(group, [0, 1, 2, 3, 4, 5].map(n => [start + n, -3.1 + between(-0.2, 0.5)]), color);
  }

  // Outliers
  drawLine(group, [[1, -1.81], [2, -1.83], [3, -1.92], [4, -2.05], [5, -2], [6, -1.98], [6.6, -2.8], [7, -3.1]], '#3a8ee0');
  drawLine(group, [[1, -1.97], [2, -2.16], [3, -2.8], [4, -3.1]], '#e8305d');
  drawLine(group, [[1, -2.2], [2, -2.28], [3, -2.5], [4, -2.8]], '#1ac8a8');
  drawLine(group, [[8, -2.4], [9, -2.1], [11, -1.77], [12, -1.72], [13, -1.77], [14, -1.9], [15, -2.1]], '#d83ad8');
  drawLine(group, [[8, -2.6], [11, -2.06], [12, -2], [13, -1.9], [14, -1.87], [15, -1.83], [16, -1.83], [18, -1.86], [20, -1.83]], '#e83aa8');
  drawLine(group, [[7, -2.29], [8, -2.23], [9, -2.4], [11, -2.46], [12, -2.32], [14, -2.35], [17, -2.43], [19, -2.36]], '#2fc86a');
  drawLine(group, [[15, -2.9], [16, -2.09], [17, -2.15], [18, -2.6], [19, -2.8]], '#2452e8');
  drawLine(group, [[6, -2.34], [7, -2.43], [8, -2.7], [9, -2.3], [10, -2.36], [11, -2.9]], '#5fd82c');
  drawLine(group, [[34, -2.7], [35, -1.8], [36, -2.5], [37, -2.3], [38, -2]], '#d83a98');
}

function drawThresholds() {
  [
    [129, '#e02a22', 2], [131, '#3fb2b8', 1], [133, '#ee7c48', 3], [135, '#a08090', 2],
    [138, '#7f8078', 5], [142.5, '#fbee04', 4], [145.5, '#f3d795', 2], [148, '#ff9208', 4],
    [150.5, '#c79ab2', 1], [155.5, '#b10e1c', 3]
  ].forEach(([y, color, width]) => {
    add(chart, 'path', { d: `M81 ${y}H476`, stroke: color, 'stroke-width': width });
  });

  [
    [129, '0.264188'], [130, '0.241388'], [132, '0.251863'],
    [147, '0.178073'], [150, '0.154638'], [155, '0.089922']
  ].forEach(([y, text]) => add(chart, 'text', { x: 82, y, class: 'chart__mark' }, text));
}

function drawAxes() {
  add(chart, 'path', { d: `M${plot.left} ${plot.top}V${plot.bottom}H${plot.right}`, fill: 'none', stroke: '#777' });
  add(chart, 'path', { d: `M${plot.left} ${plot.top}H${plot.right}V${plot.bottom}`, fill: 'none', stroke: '#c4c4c4' });
  add(chart, 'text', { x: 248, y: 22, 'text-anchor': 'middle', class: 'chart__title' }, 'Amplification Plot');

  ['1E01', '1E00', '0.1', '0.01', '0.001'].forEach((text, i) => {
    const y = getY(1 - i);
    add(chart, 'path', { d: `M79 ${y}h3`, stroke: '#777' });
    add(chart, 'text', { x: 76, y: y + 4, 'text-anchor': 'end' }, text);
  });

  for (let cycle = 2; cycle <= 40; cycle += 2) {
    add(chart, 'path', { d: `M${getX(cycle)} ${plot.bottom}v3`, stroke: '#777' });
    add(chart, 'text', { x: getX(cycle), y: 287, 'text-anchor': 'middle', class: 'chart__tick' }, String(cycle));
  }

  add(chart, 'text', { x: 278, y: 305, 'text-anchor': 'middle', class: 'chart__axis' }, 'Cycle');
  add(chart, 'text', { x: 0, y: 0, transform: 'translate(37 153) rotate(-90)', 'text-anchor': 'middle', class: 'chart__axis' }, 'ΔRn');
}

const tints = ['red', 'blue', 'green', 'yellow', 'gray', 'empty', 'white', 'empty'];
const corner = { L: 'red', M: 'blue', N: 'green', O: 'yellow', P: 'gray' };
const flags = {
  A: { 1: [1] },
  B: { 1: [1, 3, 4, 5, 6, 8, 9, 11, 12, 13, 15, 19, 20, 21] },
  C: { 1: [7, 8, 9, 10, 11, 13], 2: [12] },
  F: { 1: [7] },
  G: { 1: [1, 2, 3, 4, 5, 6, 7, 8, 9, 14, 15] },
  H: { 1: [12], 2: [10, 11, 13, 14, 15] },
  J: { 1: [4, 5, 6, 13, 14, 15] },
  L: { 1: [19, 20, 21] },
  N: { 1: [21] }
};

function getWell(row, column) {
  let tint = tints[Math.floor((column - 1) / 3)];
  if (column > 21 && corner[row]) tint = corner[row];

  const flag = Object.keys(flags[row] || {}).find(key => flags[row][key].includes(column));
  const dots = tint === 'empty' ? '' : '<span class="well__dots">...</span>';
  const mark = flag ? `<span class="well__flag">${flag}</span>` : '';
  return `<td><div class="well well--${tint}">${dots}${mark}</div></td>`;
}

function drawWells() {
  const columns = Array.from({ length: 24 }, (_, i) => i + 1);
  const head = columns.map(column => `<th scope="col">${column}</th>`).join('');
  const rows = [...'ABCDEFGHIJKLMNOP'].map(row => {
    return `<tr><th scope="row">${row}</th>${columns.map(column => getWell(row, column)).join('')}</tr>`;
  });
  document.querySelector('#wells').innerHTML =
    `<thead><tr><th></th>${head}</tr></thead><tbody>${rows.join('')}</tbody>`;
}

function drawGear() {
  const points = [];
  for (let i = 0; i < 12; i++) {
    [[-0.17, 26], [-0.11, 32], [0.11, 32], [0.17, 26]].forEach(([offset, radius]) => {
      const angle = i * Math.PI / 6 + 0.25 + offset;
      points.push(`${(Math.cos(angle) * radius).toFixed(1)} ${(Math.sin(angle) * radius).toFixed(1)}`);
    });
  }
  document.querySelector('#gear-teeth').setAttribute('d', `M${points.join('L')}Z`);
}

drawGrid();
drawCurves();
drawAxes();
drawThresholds();
drawWells();
drawGear();
```
